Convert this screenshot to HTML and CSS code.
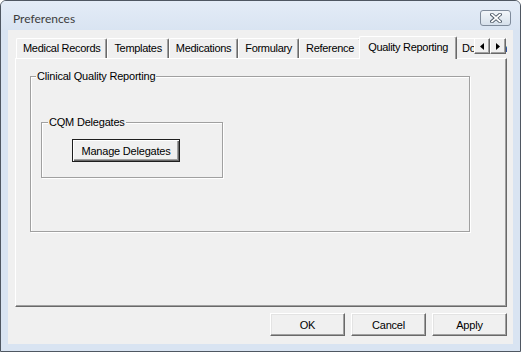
FILE: index.html
```html
<!DOCTYPE html>
<html>
<head>
<meta charset="utf-8">
<title>Preferences</title>
<link rel="stylesheet" href="styles.css">
</head>
<body>
<div class="window">
  <div class="titlebar">
    <span class="title">Preferences</span>
    <button class="close" aria-label="Close">
      <svg width="12" height="10" viewBox="0 0 12 10">
        <path d="M2 1.5 L10 8.5 M10 1.5 L2 8.5" stroke="#4e5a68" stroke-width="3.6" stroke-linecap="square" fill="none"/>
        <path d="M2 1.5 L10 8.5 M10 1.5 L2 8.5" stroke="#ffffff" stroke-width="1.7" stroke-linecap="square" fill="none"/>
      </svg>
    </button>
  </div>
  <div class="client">
    <div class="tabctl">
      <div class="tabstrip">
        <div class="tab">Medical Records</div>
        <div class="tab">Templates</div>
        <div class="tab">Medications</div>
        <div class="tab">Formulary</div>
        <div class="tab">Reference</div>
        <div class="tab selected">Quality Reporting</div>
        <div class="tab">Documents</div>
        <div class="scroller">
          <span class="arrow"><svg width="4" height="7" viewBox="0 0 4 7"><polygon points="4,0 4,7 0,3.5" fill="#000"/></svg></span>
          <span class="arrow"><svg width="4" height="7" viewBox="0 0 4 7"><polygon points="0,0 0,7 4,3.5" fill="#000"/></svg></span>
        </div>
      </div>
      <div class="panel">
        <div class="group group-outer">
          <div class="group-title">Clinical Quality Reporting</div>
          <div class="group group-inner">
            <div class="group-title">CQM Delegates</div>
            <button class="btn btn-default btn-manage">Manage Delegates</button>
          </div>
        </div>
      </div>
    </div>
    <div class="footer">
      <button class="btn">OK</button>
      <button class="btn">Cancel</button>
      <button class="btn">Apply</button>
    </div>
  </div>
</div>
</body>
</html>
```
FILE: styles.css
```css
html, body {
  margin: 0;
  padding: 0;
  background: #ffffff;
}

.window {
  box-sizing: border-box;
  width: 521px;
  height: 352px;
  border: 1px solid #4f5762;
  border-radius: 6px 6px 0 0;
  background: #d9e4f2;
  display: flex;
  flex-direction: column;
  padding: 0 7px 7px;
  overflow: hidden;
}

.titlebar {
  flex: none;
  height: 29px;
  display: flex;
  align-items: flex-start;
  margin: 0 -7px;
  padding: 0 9px 0 12px;
  background: linear-gradient(#e4ecf7, #d9e4f2);
}

.title {
  margin-top: 10px;
  font: 12px/16px Lato, "Noto Sans", sans-serif;
  color: #3c3c3c;
}

.close {
  margin: 9px 0 0 auto;
  width: 31px;
  height: 16px;
  box-sizing: border-box;
  padding: 0;
  border: 1px solid #7f8b9b;
  border-radius: 3px;
  background: linear-gradient(#f2f6fa, #d6e0eb);
  display: flex;
  align-items: center;
  justify-content: center;
}

.client {
  flex: 1;
  background: #f0f0f0;
  display: flex;
  flex-direction: column;
  padding: 6px 6px 8px 7px;
  font: 11px "Liberation Sans", Arial, sans-serif;
  letter-spacing: -0.2px;
  color: #000;
}

.tabctl {
  display: flex;
  flex-direction: column;
}

.tabstrip {
  position: relative;
  z-index: 1;
  height: 23px;
  display: flex;
  align-items: flex-start;
  overflow: hidden;
  margin-bottom: -1px;
  padding-left: 1px;
}

.tab {
  flex: none;
  box-sizing: border-box;
  height: 20px;
  margin-top: 2px;
  padding: 0 6px;
  line-height: 19px;
  letter-spacing: -0.3px;
  white-space: nowrap;
  background: #f0f0f0;
  border-top: 1px solid #ffffff;
  border-left: 1px solid #ffffff;
  border-right: 1px solid #696969;
  border-radius: 2px 2px 0 0;
  box-shadow: inset -1px 0 #a0a0a0;
}

.tab.selected {
  position: relative;
  z-index: 1;
  height: 23px;
  margin: 0 -2px;
  padding: 0 8px;
  line-height: 20px;
}

.scroller {
  position: absolute;
  top: 2px;
  right: 1px;
  display: flex;
  z-index: 2;
}

.arrow {
  box-sizing: border-box;
  width: 16px;
  height: 16px;
  display: flex;
  align-items: center;
  justify-content: center;
  background: #f0f0f0;
  border: 1px solid;
  border-color: #ffffff #696969 #696969 #ffffff;
  box-shadow: inset -1px -1px #a0a0a0;
}

.panel {
  box-sizing: border-box;
  height: 249px;
  border: 1px solid;
  border-color: #ffffff #696969 #696969 #ffffff;
  box-shadow: inset -1px -1px #a0a0a0;
  padding: 17px 0 0 14px;
}

.group {
  box-sizing: border-box;
  border: 1px solid #a0a0a0;
  box-shadow: 1px 1px 0 #ffffff, inset 1px 1px 0 #ffffff;
}

.group-title {
  width: fit-content;
  margin: -7px 0 0 5px;
  padding: 0 1px;
  line-height: 13px;
  background: #f0f0f0;
  white-space: nowrap;
}

.group-outer {
  width: 440px;
  height: 156px;
}

.group-inner {
  width: 182px;
  height: 56px;
  margin: 39px 0 0 10px;
}

.group-inner .group-title {
  margin-left: 6px;
}

.btn {
  display: block;
  box-sizing: border-box;
  height: 23px;
  padding: 0;
  font: inherit;
  letter-spacing: inherit;
  color: #000;
  background: #f0f0f0;
  border: 1px solid;
  border-color: #ffffff #696969 #696969 #ffffff;
  box-shadow: inset -1px -1px #a0a0a0, inset 1px 1px #e3e3e3;
}

.btn-default {
  border: 1px solid #1e1e1e;
  box-shadow: inset 1px 1px #ffffff, inset -1px -1px #696969, inset -2px -2px #a0a0a0;
}

.btn-manage {
  width: 108px;
  margin: 10px 0 0 30px;
}

.footer {
  display: flex;
  justify-content: flex-end;
  gap: 6px;
  margin-top: 6px;
}

.footer .btn {
  width: 75px;
}
```
